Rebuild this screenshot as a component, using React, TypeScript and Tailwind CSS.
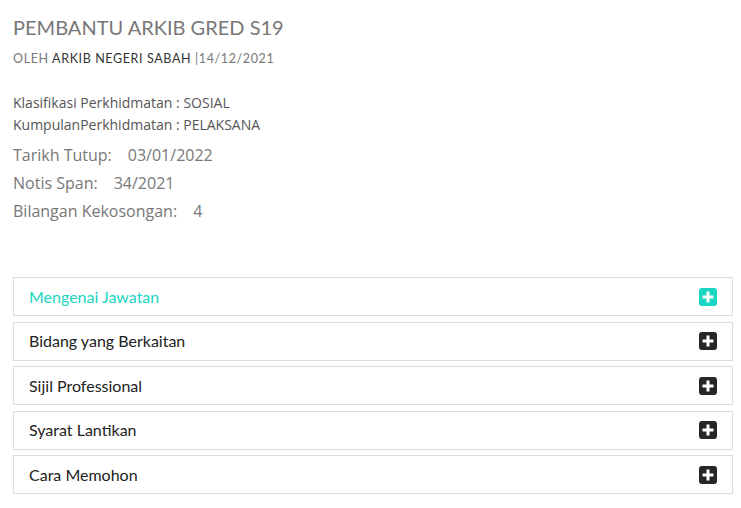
import { useState } from "react";

const sections = [
  "Mengenai Jawatan",
  "Bidang yang Berkaitan",
  "Sijil Professional",
  "Syarat Lantikan",
  "Cara Memohon",
];

function PlusBox({ active }: { active: boolean }) {
  return (
    <svg width="18" height="18" viewBox="0 0 18 18">
      <rect
        x="0"
        y="0"
        width="18"
        height="18"
        rx="3"
        fill={active ? "#1ad6c2" : "#262626"}
      />
      <rect x="7.5" y="3.5" width="3" height="11" fill="#fff" />
      <rect x="3.5" y="7.5" width="11" height="3" fill="#fff" />
    </svg>
  );
}

export default function App() {
  const [open, setOpen] = useState(0);

  return (
    <div className="w-full min-h-[508px] bg-white pl-[13px] pr-[8px] pt-[15px] font-['Open_Sans',sans-serif]">
      <h1 className="font-['Lato',sans-serif] text-[20px] leading-[24px] text-[#777777]">
        PEMBANTU ARKIB GRED S19
      </h1>
      <div className="mt-[12px] font-['Lato',sans-serif] text-[12.5px] leading-[16px] tracking-[0.05em] text-[#777777]">
        OLEH <span className="text-[#333333]">ARKIB NEGERI SABAH</span> |14/12/2021
      </div>

      <div className="mt-[25px] text-[14px] leading-[22px] text-[#555555]">
        <div>Klasifikasi Perkhidmatan : SOSIAL</div>
        <div>KumpulanPerkhidmatan : PELAKSANA</div>
      </div>

      <div className="mt-[5px] text-[16px] leading-[28px] text-[#777777]">
        <div>
          Tarikh Tutup:<span className="ml-[16px]">03/01/2022</span>
        </div>
        <div>
          Notis Span:<span className="ml-[16px]">34/2021</span>
        </div>
        <div>
          Bilangan Kekosongan:<span className="ml-[16px]">4</span>
        </div>
      </div>

      <div className="mt-[52px] flex flex-col gap-[5.5px]">
        {sections.map((s, i) => (
          <button
            key={s}
            onClick={() => setOpen(i)}
            className="h-[39px] flex items-center justify-between border border-[#dddddd] bg-white pl-[15px] pr-[15px] text-left"
          >
            <span
              className={
                "font-['Lato',sans-serif] text-[16px] " +
                (open === i ? "text-[#1ad6c2]" : "text-[#222222]")
              }
            >
              {s}
            </span>
            <PlusBox active={open === i} />
          </button>
        ))}
      </div>
    </div>
  );
}
